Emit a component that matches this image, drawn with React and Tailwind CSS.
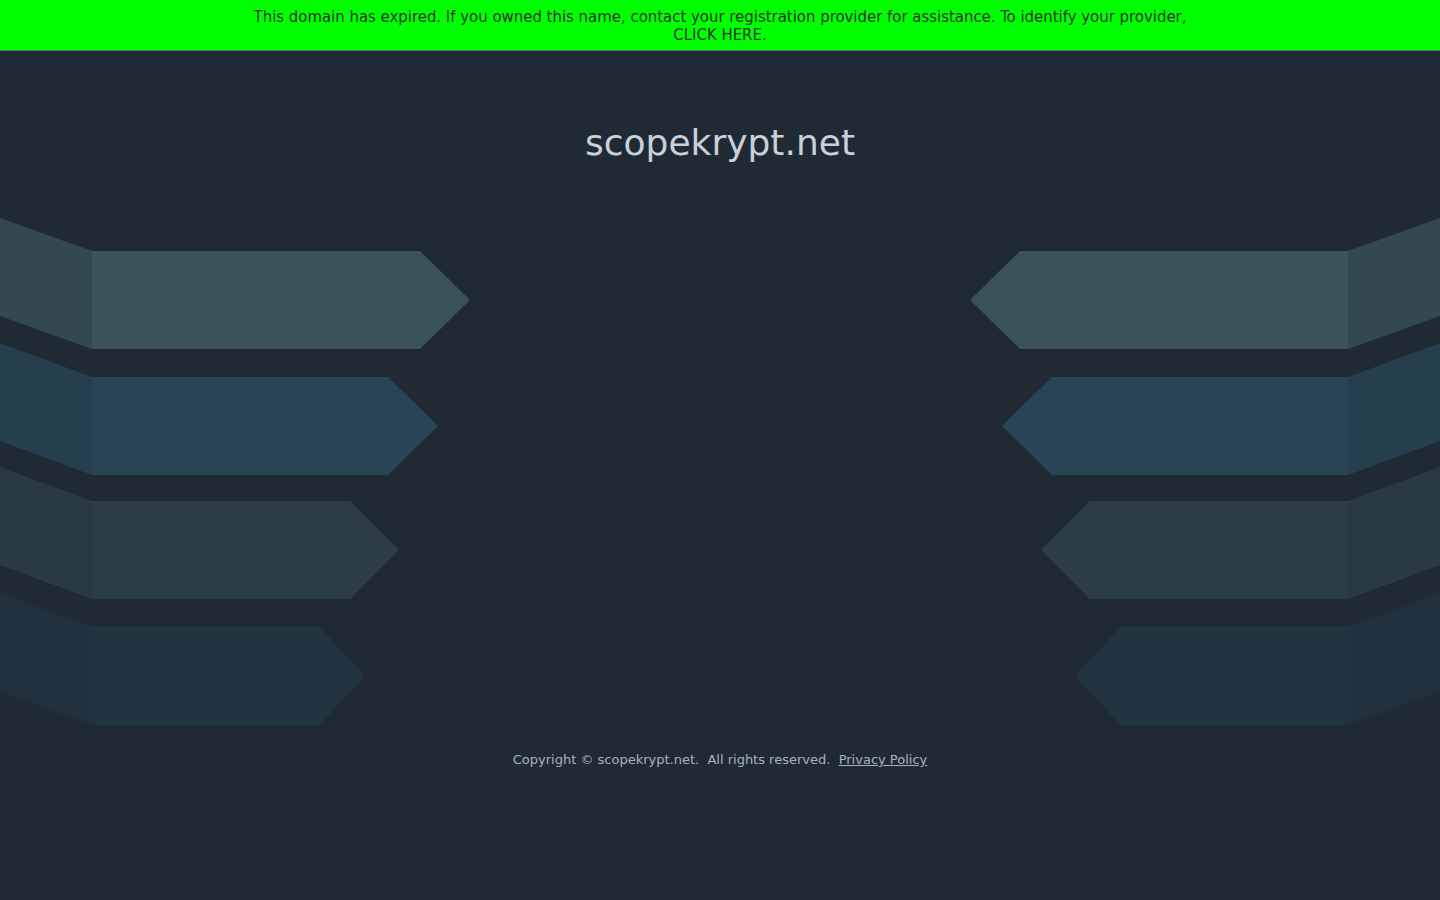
import React from 'react';

const bands = [
  { top: 251, tip: 470, end: 420, slantTop: 218, rect: '#3b5358', slant: '#34494f' },
  { top: 377, tip: 438, end: 388, slantTop: 343, rect: '#284555', slant: '#253f4d' },
  { top: 501, tip: 399, end: 350, slantTop: 467, rect: '#2c3d45', slant: '#2a3a42' },
  { top: 627, tip: 365, end: 320, slantTop: 593, rect: '#223340', slant: '#21313d' },
];

const OFFSET = 205; // svg starts at this page y

function Bands() {
  return (
    <svg width="1440" height="530" viewBox={`0 ${OFFSET} 1440 530`} className="block">
      {bands.map((b, i) => {
        const h = 98;
        const mid = b.top + h / 2;
        const rEnd = 1440 - b.end;
        const rTip = 1440 - b.tip;
        return (
          <g key={i}>
            {/* left */}
            <polygon points={`0,${b.slantTop} 92,${b.top} 92,${b.top + h} 0,${b.slantTop + h}`} fill={b.slant} />
            <polygon points={`92,${b.top} ${b.end},${b.top} ${b.tip},${mid} ${b.end},${b.top + h} 92,${b.top + h}`} fill={b.rect} />
            {/* right */}
            <polygon points={`1440,${b.slantTop} 1348,${b.top} 1348,${b.top + h} 1440,${b.slantTop + h}`} fill={b.slant} />
            <polygon points={`1348,${b.top} ${rEnd},${b.top} ${rTip},${mid} ${rEnd},${b.top + h} 1348,${b.top + h}`} fill={b.rect} />
          </g>
        );
      })}
    </svg>
  );
}

export default function App() {
  return (
    <div className="min-h-[900px] bg-[#1f2a35] font-['DejaVu_Sans',sans-serif]">
      <div className="h-[51px] bg-[#00ff00] border-b border-[#5a7a5a] pt-[8px] text-center font-['DejaVu_Sans_Condensed','DejaVu_Sans',sans-serif] font-light text-[16.6px] leading-[18px] text-[#1c381c]">
        This domain has expired. If you owned this name, contact your registration provider for assistance. To identify your provider,
        <br />
        <a href="#" className="text-[#1c381c]">CLICK HERE</a>.
      </div>
      <h1 className="pt-[70px] text-center text-[36px] leading-[44px] text-[#c8d1d8]">scopekrypt.net</h1>
      <div className="mt-[40px]">
        <Bands />
      </div>
      <div className="mt-[15px] text-center text-[13px] text-[#a9b3bb]">
        Copyright © scopekrypt.net.&nbsp; All rights reserved.&nbsp;{' '}
        <a href="#" className="underline">Privacy Policy</a>
      </div>
    </div>
  );
}
